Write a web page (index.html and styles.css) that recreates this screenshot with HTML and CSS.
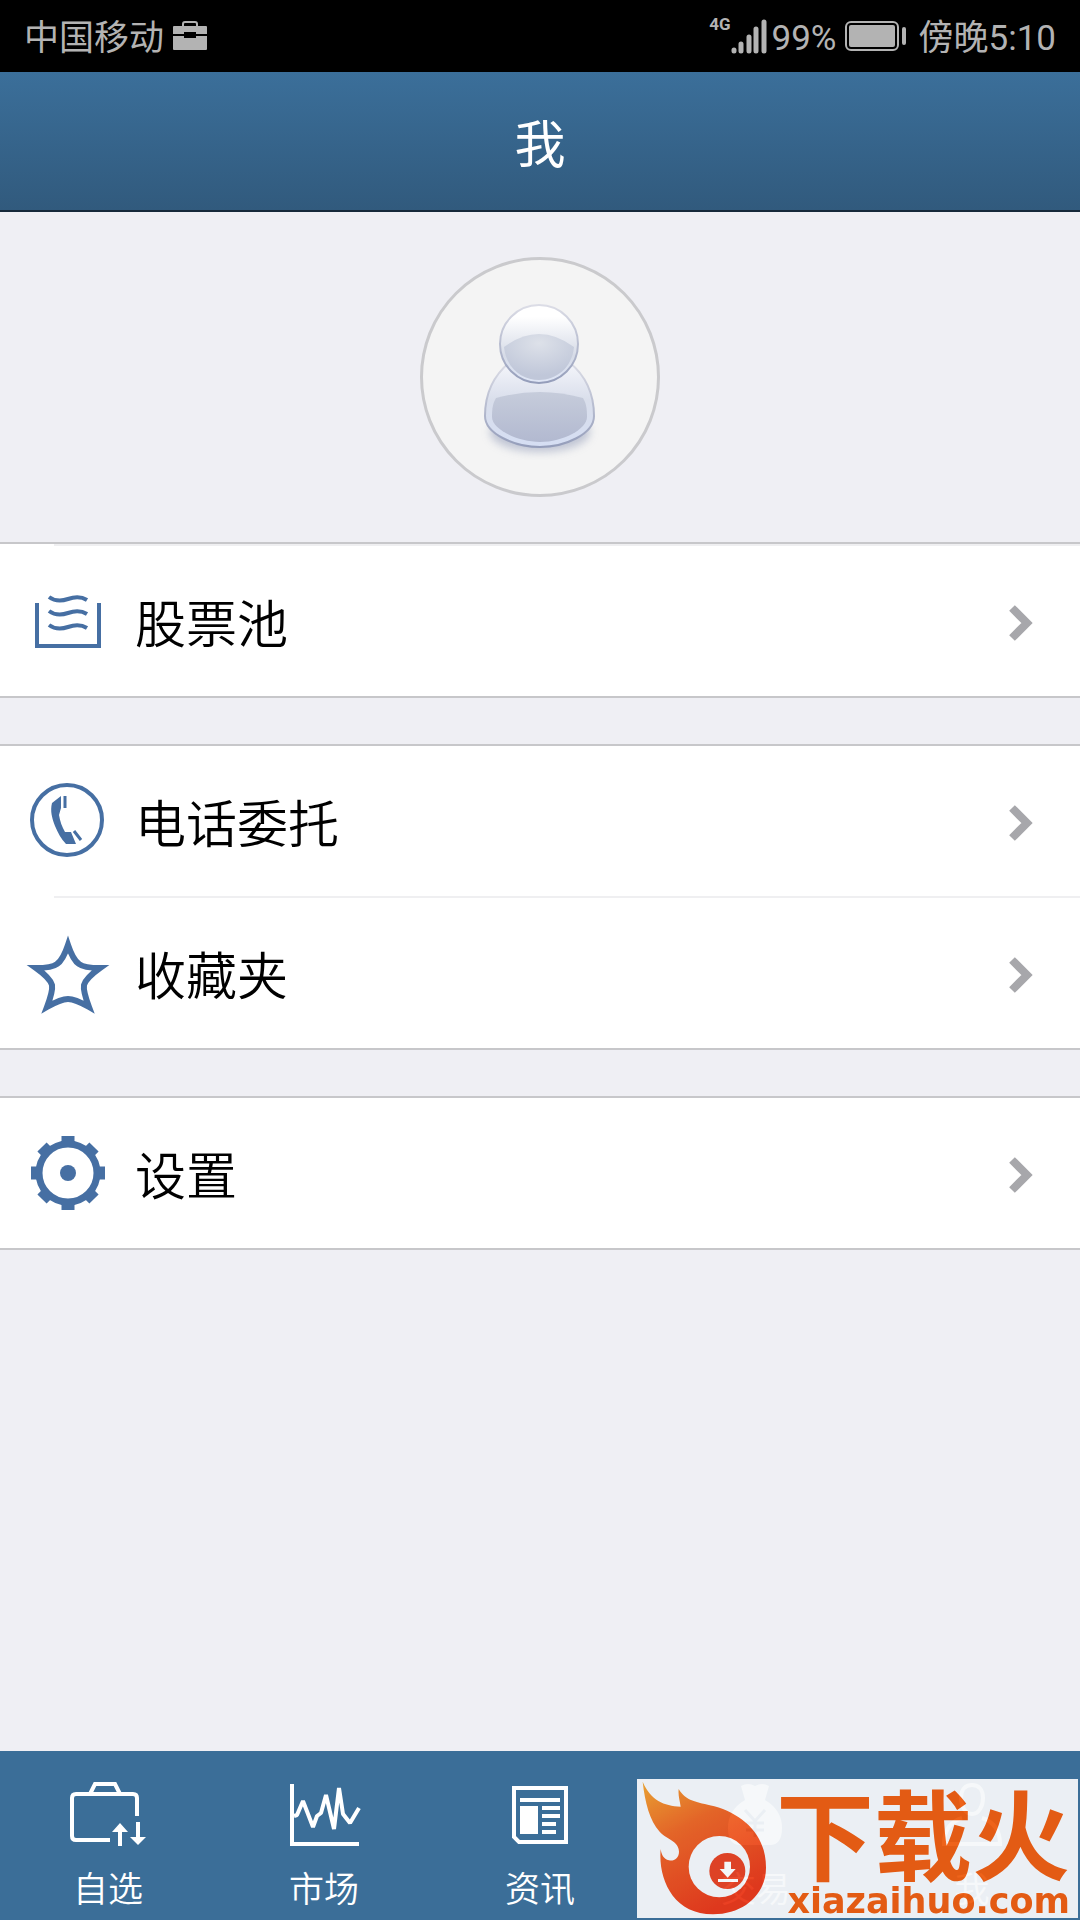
FILE: index.html
```html
<!DOCTYPE html>
<html lang="zh-CN">
<head>
  <meta charset="UTF-8">
  <meta name="viewport" content="width=device-width, initial-scale=1">
  <title>我</title>
  <link rel="stylesheet" href="styles.css">
</head>
<body>
  <div class="status-bar">
    <div class="status-group">
      <span>中国移动</span>
      <svg class="briefcase" width="36" height="32" viewBox="0 0 36 32">
        <path d="M11 7V4q0-2 2-2h10q2 0 2 2v3" fill="none" stroke="#b3b3b3" stroke-width="2"/>
        <path d="M2 6h32q1 0 1 1v7H24v-2H12v2H1V7q0-1 1-1zM1 16h11v2h12v-2h11v13q0 1-1 1H2q-1 0-1-1z" fill="#b3b3b3"/>
      </svg>
    </div>
    <div class="status-group">
      <span class="network">4G</span>
      <svg width="36" height="36" viewBox="0 0 36 36" stroke="#b3b3b3" stroke-width="5" stroke-linecap="round">
        <path d="M3 32v1M10 26v7M18 19v14M25 11v22M33 4v29"/>
      </svg>
      <span class="percent">99%</span>
      <svg class="battery" width="62" height="30" viewBox="0 0 62 30">
        <rect x="1" y="1" width="52" height="28" rx="5" fill="none" stroke="#b3b3b3" stroke-width="2"/>
        <rect x="4" y="4" width="46" height="22" rx="2" fill="#b3b3b3"/>
        <rect x="57" y="6" width="4" height="18" rx="2" fill="#b3b3b3"/>
      </svg>
      <span>傍晚5:10</span>
    </div>
  </div>

  <header class="header">
    <h1>我</h1>
  </header>

  <main class="content">
    <div class="profile">
      <button class="avatar" type="button" aria-label="头像">
        <svg width="140" height="164" viewBox="0 0 140 164">
          <defs>
            <linearGradient id="head" x1="0" y1="0" x2="0" y2="1">
              <stop offset="0.15" stop-color="#ffffff"/>
              <stop offset="0.65" stop-color="#d6dbe7"/>
              <stop offset="1" stop-color="#dfe6f6"/>
            </linearGradient>
            <radialGradient id="face" cx="0.5" cy="0.2" r="0.7">
              <stop offset="0" stop-color="#dde1e9"/>
              <stop offset="1" stop-color="#c0c7d9"/>
            </radialGradient>
            <linearGradient id="body" x1="0" y1="0" x2="0" y2="1">
              <stop offset="0" stop-color="#f5f6fb"/>
              <stop offset="0.45" stop-color="#d9deeb"/>
              <stop offset="1" stop-color="#d5def3"/>
            </linearGradient>
            <linearGradient id="chest" x1="0" y1="0" x2="0" y2="1">
              <stop offset="0" stop-color="#c6ccdb"/>
              <stop offset="1" stop-color="#b2b9d0"/>
            </linearGradient>
            <linearGradient id="edge" x1="0" y1="0" x2="0" y2="1">
              <stop offset="0" stop-color="#dcdde6"/>
              <stop offset="1" stop-color="#949dba"/>
            </linearGradient>
            <filter id="soft" x="-20%" y="-20%" width="140%" height="140%">
              <feGaussianBlur stdDeviation="4"/>
            </filter>
          </defs>
          <ellipse cx="70" cy="137" rx="50" ry="20" fill="#a9b0c6" opacity="0.7" filter="url(#soft)"/>
          <path d="M40 67C24 80 15 98 15 121c0 18 30 31 55 31s54-13 54-31c0-23-9-41-25-54z" fill="url(#body)" stroke="url(#edge)" stroke-width="2"/>
          <path d="M22 122c0-9 1-14 4-19q44-12 87 0c3 5 4 10 4 19 0 12-24 25-47 25s-48-13-48-25z" fill="url(#chest)"/>
          <circle cx="69" cy="49" r="39" fill="url(#head)" stroke="url(#edge)" stroke-width="2"/>
          <path d="M34 52q35-26 70 0c-2 21-18 33-35 33S36 73 34 52z" fill="url(#face)"/>
        </svg>
      </button>
    </div>

    <ul class="menu menu-first">
      <li>
        <a href="#pool">
          <svg class="menu-icon" viewBox="0 0 80 80" fill="none" stroke="#466fa3" stroke-width="4">
            <path d="M9 22v43h62V22"/>
            <path d="M21 16q8 6 19 2t19 1M21 30q8 6 19 2t19 1M21 44q8 6 19 2t19 1"/>
          </svg>
          <span>股票池</span>
          <svg class="arrow" viewBox="0 0 24 38"><path d="M2 6l15 15L2 36"/></svg>
        </a>
      </li>
    </ul>

    <ul class="menu">
      <li>
        <a href="#phone">
          <svg class="menu-icon" viewBox="0 0 80 80">
            <circle cx="39" cy="39" r="35" fill="none" stroke="#466fa3" stroke-width="4"/>
            <path d="M33 15l-9 7c-2 8 0 15 3 23 3 7 6 13 11 18h10l-5-12-6 0c-3-5-5-11-6-17l2-7z" fill="#466fa3"/>
            <path d="M37 15v12M46 50l7 9" stroke="#466fa3" stroke-width="3"/>
          </svg>
          <span>电话委托</span>
          <svg class="arrow" viewBox="0 0 24 38"><path d="M2 6l15 15L2 36"/></svg>
        </a>
      </li>
      <li>
        <a href="#favorites">
          <svg class="menu-icon" viewBox="0 0 80 80">
            <path d="M40 12q5 15 11 19 5 4 21 4-14 10-16 17-1 6 5 22-14-8-21-8t-21 8q6-16 5-22-2-7-16-17 16 0 21-4 6-4 11-19z" fill="none" stroke="#466fa3" stroke-width="6"/>
          </svg>
          <span>收藏夹</span>
          <svg class="arrow" viewBox="0 0 24 38"><path d="M2 6l15 15L2 36"/></svg>
        </a>
      </li>
    </ul>

    <ul class="menu">
      <li>
        <a href="#settings">
          <svg class="menu-icon" viewBox="0 0 80 80">
            <circle cx="40" cy="40" r="29" fill="none" stroke="#466fa3" stroke-width="7"/>
            <path d="M40 3v8M40 69v8M3 40h8M69 40h8M14 14l6 6M60 60l6 6M14 66l6-6M60 20l6-6" stroke="#466fa3" stroke-width="13"/>
            <circle cx="40" cy="40" r="8" fill="#466fa3"/>
          </svg>
          <span>设置</span>
          <svg class="arrow" viewBox="0 0 24 38"><path d="M2 6l15 15L2 36"/></svg>
        </a>
      </li>
    </ul>
  </main>

  <nav class="tab-bar">
    <a href="#watchlist">
      <svg viewBox="0 0 80 72" fill="none" stroke="#fff" stroke-width="4">
        <path d="M42 62H8q-4 0-4-4V20q0-4 4-4h57q4 0 4 4v18M22 16l5-10h20l5 10M52 68V50M70 44v18"/>
        <path d="M44 54l8-9 8 9zM62 59l8 8 8-8z" fill="#fff" stroke="none"/>
      </svg>
      <span>自选</span>
    </a>
    <a href="#market">
      <svg viewBox="0 0 80 72" fill="none" stroke="#fff" stroke-width="4" stroke-linejoin="bevel">
        <path d="M8 6v60h67" stroke-linejoin="miter"/>
        <path d="M10 38l3-1 6-14 10 26 4-11 4-3 5-18 8 34 5-41 4 26 7 9 9-15"/>
      </svg>
      <span>市场</span>
    </a>
    <a href="#news">
      <svg viewBox="0 0 80 72" fill="none" stroke="#fff" stroke-width="4">
        <path d="M14 10h52v54H19l-5-5z"/>
        <path d="M20 22h40M42 30h18M42 38h18M42 46h14M42 54h14"/>
        <path d="M20 28h18v28H20z" fill="#fff" stroke="none"/>
      </svg>
      <span>资讯</span>
    </a>
    <a href="#trade">
      <svg viewBox="0 0 80 72">
        <path d="M25 8q7-4 14 0 7-4 14 0l-4 14q17 10 17 28 0 17-12 17H24Q12 67 12 50q0-18 17-28z" fill="#fff"/>
        <path d="M29 32l10 11 10-11M39 43v16M30 45h18M30 52h18" fill="none" stroke="#3b6e98" stroke-width="3"/>
      </svg>
      <span>交易</span>
    </a>
    <a href="#me">
      <svg viewBox="0 0 80 72" fill="none" stroke="#fff" stroke-width="4">
        <path d="M40 7c-7 0-11 5-11 13s4 16 11 16 11-8 11-16S47 7 40 7z"/>
        <path d="M12 66q0-20 18-26M68 66q0-20-18-26M10 66h60"/>
      </svg>
      <span>我</span>
    </a>

    <div class="watermark">
      <svg class="flame" viewBox="0 0 390 417">
        <defs>
          <linearGradient id="fire" x1="0" y1="0" x2="0.5" y2="1">
            <stop offset="0" stop-color="#f3a42c"/>
            <stop offset="0.4" stop-color="#ee6522"/>
            <stop offset="1" stop-color="#e93516"/>
          </linearGradient>
        </defs>
        <path d="M17 8C24 70 38 125 68 158c22 24 58 28 58 60 0 20-15 29-30 26-17-4-23-18-25-34-8 90 37 196 157 196 95 0 159-62 159-140 0-100-70-160-155-184-55-14-85-15-107-52-2 20 3 32 6 53C80 80 42 65 17 8z" fill="url(#fire)"/>
        <circle cx="247" cy="263" r="92" fill="#f6f8fa"/>
        <circle cx="271" cy="276" r="54" fill="#e8401f"/>
        <path d="M262 248h20v22h14l-24 26-24-26h14zM243 300h60v9h-60z" fill="#fff"/>
      </svg>
      <div class="brand">
        <strong>下载火</strong>
        <span>xiazaihuo.com</span>
      </div>
    </div>
  </nav>
</body>
</html>
```
FILE: styles.css
```css
* {
  box-sizing: border-box;
}

body {
  margin: 0;
  min-height: 100vh;
  display: flex;
  flex-direction: column;
  background-color: #efeff4;
  color: #000;
  font-family: Roboto, "Noto Sans CJK SC", sans-serif;
  font-weight: 350;
}

a {
  color: inherit;
  text-decoration: none;
}

svg {
  flex: none;
  overflow: visible;
}

.status-bar {
  display: flex;
  justify-content: space-between;
  align-items: center;
  height: 72px;
  padding: 0 24px;
  background: #000;
  color: #b3b3b3;
  font-size: 35px;
  font-weight: 400;
  line-height: 48px;
}

.status-group {
  display: flex;
  align-items: center;
}

.status-group span {
  padding-top: 5px;
}

.briefcase {
  margin-left: 8px;
}

.status-group .network {
  align-self: flex-start;
  padding: 0;
  font-size: 17px;
  font-weight: 700;
  line-height: 28px;
}

.percent {
  margin: 0 8px 0 5px;
}

.battery {
  margin-right: 12px;
}

.header {
  height: 140px;
  display: flex;
  align-items: center;
  justify-content: center;
  background: linear-gradient(#3b6f9a, #315a7d);
  border-bottom: 2px solid #16293a;
  color: #fff;
}

.header h1 {
  margin: 0;
  font-size: 51px;
  font-weight: 400;
}

.content {
  flex: 1;
}

.profile {
  display: flex;
  justify-content: center;
  padding: 45px 0;
}

.avatar {
  width: 240px;
  height: 240px;
  display: flex;
  align-items: center;
  justify-content: center;
  padding: 0;
  background: #f4f4f4;
  border: 3px solid #cacacd;
  border-radius: 50%;
}

.menu {
  margin: 0 0 46px;
  padding: 0;
  list-style: none;
  background: #fff;
  border-top: 2px solid #c7c7ca;
  border-bottom: 2px solid #c7c7ca;
}

.menu a {
  display: flex;
  align-items: center;
  height: 150px;
  padding: 0 46px 0 28px;
  font-size: 51px;
}

.menu span {
  flex: 1;
  margin-left: 27px;
}

.menu li + li::before,
.menu-first li::before {
  content: "";
  display: block;
  height: 2px;
  margin-left: 54px;
  background: #efeff1;
}

.menu-icon {
  width: 80px;
  height: 80px;
}

.arrow {
  width: 24px;
  height: 38px;
  fill: none;
  stroke: #a7a7ab;
  stroke-width: 8px;
}

.tab-bar {
  position: relative;
  display: flex;
  height: 169px;
  padding-top: 27px;
  background: #3b6e98;
  color: #fff;
}

.tab-bar a {
  flex: 1;
  display: flex;
  flex-direction: column;
  align-items: center;
  gap: 17px;
  font-size: 35px;
  line-height: 48px;
}

.tab-bar a svg {
  width: 80px;
  height: 72px;
}

/* download site badge over the last two tabs */
.watermark {
  position: absolute;
  right: 2px;
  bottom: 2px;
  display: flex;
  width: 441px;
  height: 139px;
  background: #f6f8fa;
  color: #ee5a0c;
  opacity: 0.94;
}

.flame {
  width: 130px;
  height: 139px;
}

.brand {
  display: flex;
  flex-direction: column;
  align-items: flex-end;
  flex: 1;
  padding: 16px 8px 0 0;
}

.brand strong {
  font-size: 98px;
  font-weight: 700;
  line-height: 90px;
}

.brand span {
  font-family: "DejaVu Sans", sans-serif;
  font-size: 35px;
  font-weight: 700;
  line-height: 32px;
}
```
